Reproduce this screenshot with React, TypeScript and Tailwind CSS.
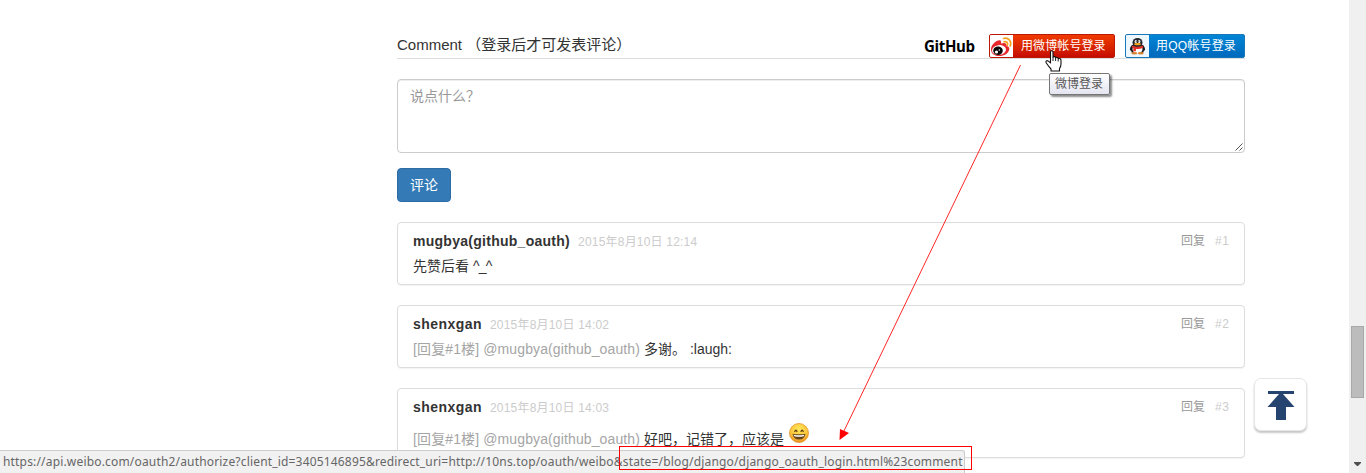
import type { ReactNode } from 'react';

const SANS = "font-['Liberation_Sans','Noto_Sans_CJK_SC',sans-serif]";

function WeiboLogo() {
  return (
    <svg width="23" height="22" viewBox="0 0 23 22" className="block">
      <rect width="23" height="22" fill="#fff" />
      <path d="M1 14.500C.5 10 7 4.500 10 5.200C11.500 5.600 11 8 11 8.500C14 7.500 17 7.500 16.500 11C19 11.500 20 13 19 15.500C17 20.500 10 22 5.500 20.500C2.500 19.500 1 17.500 1 14.500Z" fill="#e6282d" />
      <ellipse cx="9" cy="15" rx="7" ry="4.900" fill="#fff" transform="rotate(-8 9 15)" />
      <ellipse cx="8" cy="15.800" rx="4.800" ry="4.200" fill="#080808" />
      <circle cx="6.500" cy="17" r="1.600" fill="#fff" />
      <circle cx="9.300" cy="15" r=".7" fill="#fff" />
      <path d="M13.500 3.500C18.500 2 22 6.500 20.200 11M14 6.700C16.800 6 18.200 8 17.300 10.300" fill="none" stroke="#f7a01c" strokeWidth="1.700" strokeLinecap="round" />
    </svg>
  );
}

function PenguinLogo() {
  return (
    <svg width="23" height="22" viewBox="0 0 23 22" className="block">
      <path d="M6 10C3.500 12.500 3.500 16 5 15.500L6 18H17L18 15.500C20 16 19 12 17 10Z" fill="#17171b" />
      <ellipse cx="11.500" cy="14" rx="5" ry="4.500" fill="#fff" />
      <ellipse cx="11.500" cy="7.800" rx="5" ry="4.900" fill="#25252b" />
      <ellipse cx="9.800" cy="6.500" rx="1.200" ry="1.600" fill="#fff" />
      <ellipse cx="13.200" cy="6.500" rx="1.200" ry="1.600" fill="#fff" />
      <circle cx="10.200" cy="6.600" r=".5" fill="#111" />
      <circle cx="12.800" cy="6.600" r=".5" fill="#111" />
      <ellipse cx="11.500" cy="9.200" rx="3.300" ry="1.100" fill="#f6a71c" />
      <path d="M5.800 10.400Q11.500 13.200 17.200 10.400V12.700Q13 14.500 9.900 13.800V16.200H7.300V13L5.800 12.200Z" fill="#e32c22" />
      <ellipse cx="8.300" cy="18.200" rx="3" ry="1.200" fill="#d98434" />
      <ellipse cx="14.700" cy="18.200" rx="3" ry="1.200" fill="#d98434" />
    </svg>
  );
}

function LaughFace() {
  return (
    <svg width="20" height="20" viewBox="0 0 20 20" className="block">
      <defs>
        <radialGradient id="face" cx=".5" cy=".3" r=".7">
          <stop offset="0" stopColor="#ffe65a" />
          <stop offset=".65" stopColor="#fbc63c" />
          <stop offset="1" stopColor="#e58b21" />
        </radialGradient>
      </defs>
      <circle cx="10" cy="10" r="9.500" fill="url(#face)" stroke="#e49327" strokeWidth=".8" />
      <path d="M5.800 8.500Q6.900 5.900 8 8.500M12 8.500Q13.100 5.900 14.200 8.500" fill="none" stroke="#5c3a12" strokeWidth="1.300" strokeLinecap="round" />
      <path d="M3.500 10.700Q10 12 16.500 10.700Q15.800 16.500 10 16.500Q4.200 16.500 3.500 10.700Z" fill="#67431a" />
      <path d="M4.500 11.700Q10 12.700 15.500 11.700L14.700 13.300Q10 14.300 5.300 13.300Z" fill="#fff" />
    </svg>
  );
}

function HandCursor() {
  return (
    <svg width="18" height="23" viewBox="0 0 18 23" className="block">
      <path d="M5.500 2Q5.500 .7 6.700 .7Q8 .7 8 2V7Q10.300 5.900 10.600 7.700Q12.800 6.900 13.200 8.700Q16 8 16 10.500V14Q16 16.500 14.500 18.500V21H6V19Q4 17 1.300 13Q.3 11 1.700 10.700Q3.200 10.400 5.500 13Z" fill="#fff" stroke="#111" strokeWidth="1.100" strokeLinejoin="round" />
      <path d="M8 7V11M10.600 7.700V11M13.200 8.700V11.500" stroke="#222" strokeWidth="1" />
    </svg>
  );
}

function Comment({ name, nameClass, date, floor, tall, children }: {
  name: string;
  nameClass: string;
  date: string;
  floor: number;
  tall?: boolean;
  children: ReactNode;
}) {
  return (
    <article className={`${tall ? 'h-[70px]' : 'mb-5 h-[63px]'} rounded-[4px] border border-[#ddd] bg-white px-[15px] pt-[8px] shadow-[0_1px_1px_rgba(0,0,0,0.05)]`}>
      <div className="flex h-5 items-center whitespace-nowrap">
        <strong className={`text-[14px] leading-5 text-[#333] ${nameClass}`}>{name}</strong>
        <time className="mt-px ml-2 text-[12px] leading-5 tracking-[0.2px] text-[#ccc]">{date}</time>
        <span className="-mt-px ml-auto text-[12px] leading-5 text-[#999]">回复</span>
        <span className="-mt-px ml-[10px] w-[14px] text-[12px] leading-5 tracking-[0.5px] text-[#ccc]">#{floor}</span>
      </div>
      <div className={`flex h-5 items-center whitespace-pre text-[14px] leading-5 text-[#333] ${tall ? 'mt-[12px]' : 'mt-[5px]'}`}>
        {children}
      </div>
    </article>
  );
}

function ReplyTo() {
  return <span className="tracking-[0.12px] text-[#a5a5a5]">[回复#1楼] @mugbya(github_oauth) </span>;
}

export default function App() {
  return (
    <div className={`relative flex h-[473px] w-[1366px] overflow-hidden bg-white text-[14px] text-[#333] ${SANS}`}>
      <main className="ml-[397px] w-[848px] pt-[33px]">
        <header className="flex h-[26px] items-start border-b border-[#ddd]">
          <h2 className="mt-px text-[15px] leading-[21px] whitespace-pre">Comment （登录后才可发表评论）</h2>
          <span className="mt-[2px] ml-auto w-[52px] origin-left scale-x-[0.91] text-[16.5px] leading-[22px] font-bold tracking-[-0.4px] text-black font-['Open_Sans',sans-serif]">GitHub</span>
          <div className="mt-px ml-[13px] flex h-6 w-[126px] overflow-hidden rounded-[2px] border border-[#ba1a05] bg-linear-to-b from-[#f03a00] to-[#c60a00] text-[12px] leading-[22px] text-white">
            <WeiboLogo />
            <span className="ml-[8px] whitespace-nowrap tracking-[0.1px]">用微博帐号登录</span>
          </div>
          <div className="mt-px ml-[10px] flex h-6 w-[120px] overflow-hidden rounded-[2px] border border-[#1777b8] bg-linear-to-b from-[#0085d5] to-[#0069bd] text-[12px] leading-[22px] text-white">
            <div className="bg-[#eef7fd]"><PenguinLogo /></div>
            <span className="ml-[7px] whitespace-nowrap tracking-[0.2px]">用QQ帐号登录</span>
          </div>
        </header>

        <div className="mt-5 flex h-[74px] justify-between rounded-[4px] border border-[#ccc] bg-white pt-[6px] pl-3 shadow-[inset_0_1px_1px_rgba(0,0,0,0.075)]">
          <span className="text-[14px] leading-5 text-[#999]">说点什么？</span>
          <svg width="10" height="10" className="self-end" viewBox="0 0 10 10">
            <path d="M1.500 8.500L8.500 1.500M5.500 8.500L8.500 5.500" stroke="#555" strokeWidth="1" />
          </svg>
        </div>
        <button className="mt-[15px] mb-5 block h-[34px] w-[54px] rounded-[4px] border border-[#2e6da4] bg-[#337ab7] text-[14px] leading-5 text-white">评论</button>

        <Comment name="mugbya(github_oauth)" nameClass="tracking-[0.27px]" date="2015年8月10日 12:14" floor={1}>
          先赞后看 <span className="tracking-[-0.7px]">^_^</span>
        </Comment>
        <Comment name="shenxgan" nameClass="tracking-[0.45px]" date="2015年8月10日 14:02" floor={2}>
          <ReplyTo />多谢。 :laugh:
        </Comment>
        <Comment name="shenxgan" nameClass="tracking-[0.45px]" date="2015年8月10日 14:03" floor={3} tall>
          <ReplyTo />好吧，记错了，应该是
          <span className="mb-[12px] ml-[5px]"><LaughFace /></span>
        </Comment>
      </main>

      <aside className="ml-auto flex w-[17px] flex-col items-center bg-[#f0f0f0]">
        <div className="mt-[326px] h-[72px] w-[13px] border border-[#a8a8a8] bg-[#bcbcbc]" />
        <svg width="7" height="4" viewBox="0 0 7 4" className="mt-auto mb-[7px]"><path d="M0 0H7V1L4 4H3L0 1Z" fill="#505050" /></svg>
      </aside>

      <button aria-label="返回顶部" className="absolute top-[378px] left-[1254px] flex h-[53px] w-[53px] justify-center rounded-[7px] border border-[#e6e6e6] bg-white pt-[12px] shadow-[0_2px_2px_rgba(0,0,0,0.22)]">
        <svg width="28" height="29" viewBox="0 0 28 29">
          <path d="M1 0H27V3H16L27.500 16H19V29H9V16H.5L12 3H1Z" fill="#254570" />
        </svg>
      </button>

      <div className="absolute top-[450px] left-0 h-[24px] w-[965px] rounded-tr-[3px] border-t border-r border-[#ccc] bg-[#f1f1f1] pl-[3px] text-[12px] leading-[22px] tracking-[0.174px] whitespace-nowrap text-[#666] font-['Noto_Sans','Noto_Sans_CJK_SC',sans-serif]">
        <span>https://api.weibo.com/oauth2/authorize?client_id=3405146895&amp;redirect_uri=http://10ns.top/oauth/weibo&amp;state=/blog/django/django_oauth_login.html%23comment</span>
      </div>

      <div className="absolute top-[73px] left-[1049px] h-[22px] w-[61px] rounded-[2px] border border-[#767676] bg-linear-to-b from-white to-[#e4e5f0] pl-[5px] text-[12px] leading-5 text-[#575757] shadow-[2px_2px_2px_rgba(0,0,0,0.45)]">微博登录</div>
      <div className="absolute top-[50px] left-[1045px]"><HandCursor /></div>

      <svg className="pointer-events-none absolute top-0 left-0" width="1366" height="473" viewBox="0 0 1366 473">
        <path d="M1020.500 65L843 433" stroke="#ff0000" strokeOpacity=".85" fill="none" />
        <path d="M839.500 440L840 429L849 433Z" fill="#f00" />
        <rect x="619.500" y="446.500" width="352" height="23" fill="none" stroke="#f00" />
      </svg>
    </div>
  );
}
